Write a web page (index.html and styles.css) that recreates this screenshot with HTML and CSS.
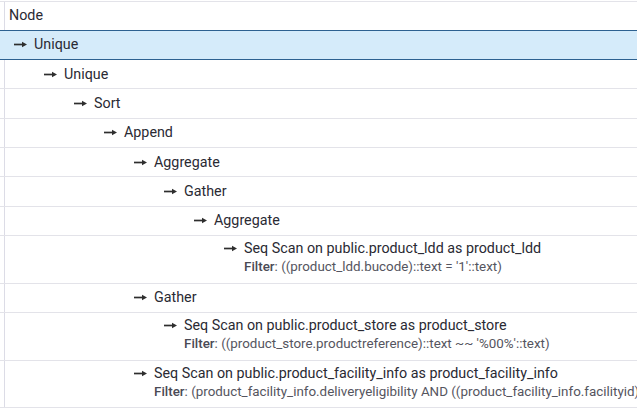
FILE: index.html
```html
<!DOCTYPE html>
<html>
<head>
<meta charset="utf-8">
<link rel="stylesheet" href="styles.css">
</head>
<body>
<div class="grid">
  <div class="row head"><div class="gutter"></div><div class="cell"><span class="hdr">Node</span></div></div>

  <div class="row selected"><div class="gutter"></div><div class="cell lvl0"><div class="node"><svg class="arr" viewBox="0 0 13 7"><path d="M0 3.5H9.5" /><polygon points="8,0.8 13,3.5 8,6.2"/></svg><span class="name">Unique</span></div></div></div>

  <div class="row"><div class="gutter"></div><div class="cell lvl1"><div class="node"><svg class="arr" viewBox="0 0 13 7"><path d="M0 3.5H9.5" /><polygon points="8,0.8 13,3.5 8,6.2"/></svg><span class="name">Unique</span></div></div></div>

  <div class="row"><div class="gutter"></div><div class="cell lvl2"><div class="node"><svg class="arr" viewBox="0 0 13 7"><path d="M0 3.5H9.5" /><polygon points="8,0.8 13,3.5 8,6.2"/></svg><span class="name">Sort</span></div></div></div>

  <div class="row"><div class="gutter"></div><div class="cell lvl3"><div class="node"><svg class="arr" viewBox="0 0 13 7"><path d="M0 3.5H9.5" /><polygon points="8,0.8 13,3.5 8,6.2"/></svg><span class="name">Append</span></div></div></div>

  <div class="row"><div class="gutter"></div><div class="cell lvl4"><div class="node"><svg class="arr" viewBox="0 0 13 7"><path d="M0 3.5H9.5" /><polygon points="8,0.8 13,3.5 8,6.2"/></svg><span class="name">Aggregate</span></div></div></div>

  <div class="row"><div class="gutter"></div><div class="cell lvl5"><div class="node"><svg class="arr" viewBox="0 0 13 7"><path d="M0 3.5H9.5" /><polygon points="8,0.8 13,3.5 8,6.2"/></svg><span class="name">Gather</span></div></div></div>

  <div class="row"><div class="gutter"></div><div class="cell lvl6"><div class="node"><svg class="arr" viewBox="0 0 13 7"><path d="M0 3.5H9.5" /><polygon points="8,0.8 13,3.5 8,6.2"/></svg><span class="name">Aggregate</span></div></div></div>

  <div class="row tall"><div class="gutter"></div><div class="cell lvl7"><div class="node"><svg class="arr" viewBox="0 0 13 7"><path d="M0 3.5H9.5" /><polygon points="8,0.8 13,3.5 8,6.2"/></svg><span class="name">Seq Scan on public.product_ldd as product_ldd</span></div><div class="filter"><b>Filter</b>: ((product_ldd.bucode)::text = '1'::text)</div></div></div>

  <div class="row"><div class="gutter"></div><div class="cell lvl4"><div class="node"><svg class="arr" viewBox="0 0 13 7"><path d="M0 3.5H9.5" /><polygon points="8,0.8 13,3.5 8,6.2"/></svg><span class="name">Gather</span></div></div></div>

  <div class="row tall"><div class="gutter"></div><div class="cell lvl5"><div class="node"><svg class="arr" viewBox="0 0 13 7"><path d="M0 3.5H9.5" /><polygon points="8,0.8 13,3.5 8,6.2"/></svg><span class="name">Seq Scan on public.product_store as product_store</span></div><div class="filter"><b>Filter</b>: ((product_store.productreference)::text ~~ '%00%'::text)</div></div></div>

  <div class="row tall"><div class="gutter"></div><div class="cell lvl4"><div class="node"><svg class="arr" viewBox="0 0 13 7"><path d="M0 3.5H9.5" /><polygon points="8,0.8 13,3.5 8,6.2"/></svg><span class="name">Seq Scan on public.product_facility_info as product_facility_info</span></div><div class="filter"><b>Filter</b>: (product_facility_info.deliveryeligibility AND ((product_facility_info.facilityid) = 1))</div></div></div>
</div>
</body>
</html>
```

FILE: styles.css
```css
html, body {
  margin: 0;
  padding: 0;
  background: #ffffff;
}
body {
  font-family: Roboto, "Noto Sans", sans-serif;
  font-size: 14.3px;
  color: #2a2a33;
  overflow: hidden;
}
.grid {
  padding-top: 1px;
  width: 637px;
  overflow: hidden;
}
.row {
  display: flex;
  border-bottom: 1px solid #e3e3e9;
  height: 28.33px;
  white-space: nowrap;
}
.row.head {
  border-top: 1px solid #e3e3e9;
  border-bottom: none;
  height: 27.67px;
}
.row.selected {
  background: #d5ebfa;
  border-top: 1px solid #2d6190;
  border-bottom: 1px solid #2d6190;
}
.row.tall {
  height: 46.67px;
}
.gutter {
  width: 4px;
  flex: none;
  border-right: 1px solid #dcdce6;
}
.row.selected .gutter {
  border-right-color: transparent;
}
.cell {
  flex: 1;
  display: flex;
  flex-direction: column;
  justify-content: center;
  padding-left: 4px;
  min-width: 0;
  overflow: hidden;
}
.row.tall .cell {
  justify-content: flex-start;
  padding-top: 4px;
}
.hdr {
  line-height: 17px;
}
.node {
  display: flex;
  align-items: center;
  line-height: 17px;
}
.arr {
  width: 13px;
  height: 7px;
  flex: none;
  margin-right: 7px;
  fill: #2e2e2e;
  stroke: #2e2e2e;
  stroke-width: 1.7;
}
.arr polygon {
  stroke: none;
}
.filter {
  padding-left: 20px;
  font-size: 13.4px;
  line-height: 20px;
  color: #555560;
}
.filter b {
  font-weight: 500;
  color: #4a4a55;
}
.lvl0 { padding-left: 9px; }
.lvl1 { padding-left: 39px; }
.lvl2 { padding-left: 69px; }
.lvl3 { padding-left: 99px; }
.lvl4 { padding-left: 129px; }
.lvl5 { padding-left: 159px; }
.lvl6 { padding-left: 189px; }
.lvl7 { padding-left: 219px; }
```
